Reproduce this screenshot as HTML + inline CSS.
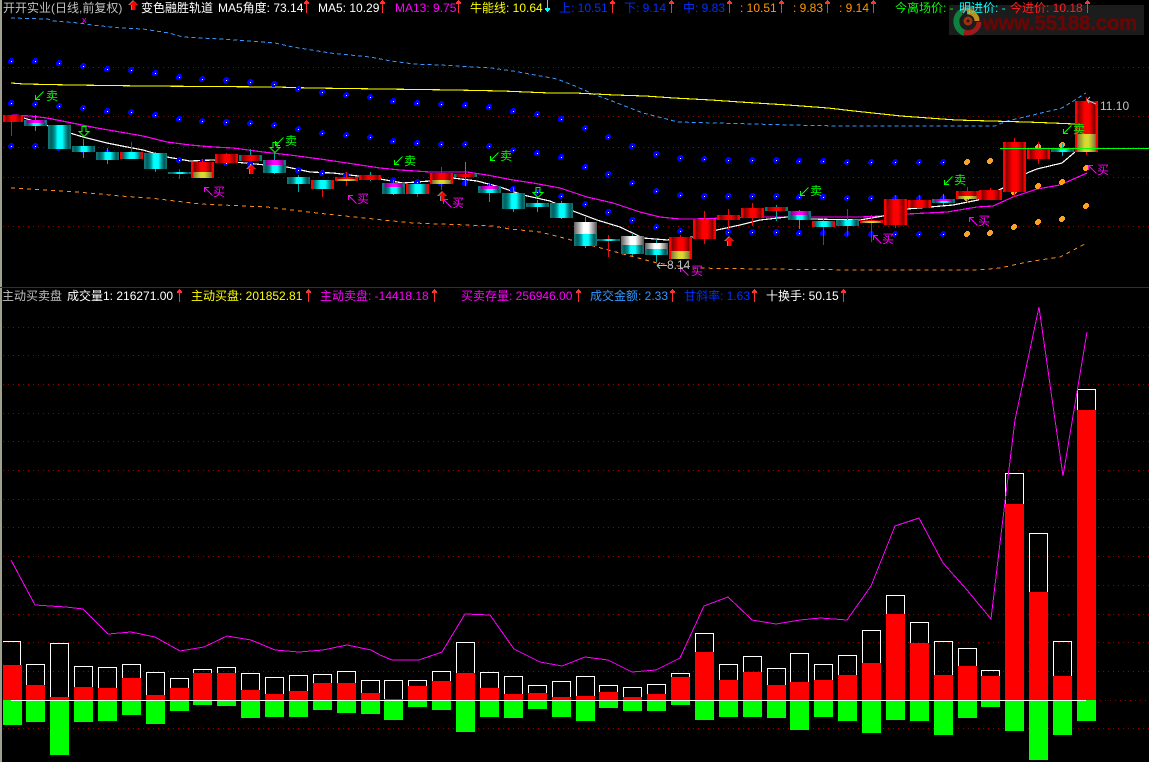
<!DOCTYPE html>
<html lang="zh"><head><meta charset="utf-8"><title>主动买卖盘</title>
<style>
html,body{margin:0;padding:0;background:#000;width:1149px;height:762px;overflow:hidden}
svg{display:block}
text{font-family:"Liberation Sans","WenQuanYi Zen Hei","Noto Sans CJK SC",sans-serif;font-size:12px}
</style></head><body>
<svg xmlns="http://www.w3.org/2000/svg" width="1149" height="762" viewBox="0 0 1149 762">
<defs>
<linearGradient id="c"><stop offset="0" stop-color="#1a7878"/><stop offset=".15" stop-color="#006060"/><stop offset=".3" stop-color="#009898"/><stop offset=".42" stop-color="#0ff"/><stop offset=".62" stop-color="#0ff"/><stop offset=".75" stop-color="#00a0a0"/><stop offset=".88" stop-color="#005858"/><stop offset="1" stop-color="#1a7878"/></linearGradient>
<linearGradient id="r"><stop offset="0" stop-color="#f00"/><stop offset=".08" stop-color="#f00"/><stop offset=".14" stop-color="#800000"/><stop offset=".42" stop-color="#f00"/><stop offset=".62" stop-color="#f00"/><stop offset=".86" stop-color="#800000"/><stop offset=".92" stop-color="#f00"/><stop offset="1" stop-color="#f00"/></linearGradient>
<linearGradient id="cr"><stop offset="0" stop-color="#f00"/><stop offset=".1" stop-color="#f00"/><stop offset=".11" stop-color="#006060"/><stop offset=".42" stop-color="#0ff"/><stop offset=".62" stop-color="#0ff"/><stop offset=".89" stop-color="#006060"/><stop offset=".9" stop-color="#f00"/><stop offset="1" stop-color="#f00"/></linearGradient>
<linearGradient id="rt"><stop offset="0" stop-color="#008080"/><stop offset=".1" stop-color="#008080"/><stop offset=".11" stop-color="#800000"/><stop offset=".45" stop-color="#f00"/><stop offset=".6" stop-color="#f00"/><stop offset=".89" stop-color="#800000"/><stop offset=".9" stop-color="#008080"/><stop offset="1" stop-color="#008080"/></linearGradient>
<linearGradient id="m"><stop offset="0" stop-color="#008080"/><stop offset=".1" stop-color="#008080"/><stop offset=".11" stop-color="#800080"/><stop offset=".45" stop-color="#f0f"/><stop offset=".6" stop-color="#f0f"/><stop offset=".89" stop-color="#800080"/><stop offset=".9" stop-color="#008080"/><stop offset="1" stop-color="#008080"/></linearGradient>
<linearGradient id="y"><stop offset="0" stop-color="#f00"/><stop offset=".08" stop-color="#f00"/><stop offset=".12" stop-color="#808040"/><stop offset=".42" stop-color="#d8d830"/><stop offset=".6" stop-color="#d8d830"/><stop offset=".88" stop-color="#808040"/><stop offset=".92" stop-color="#f00"/><stop offset="1" stop-color="#f00"/></linearGradient>
<linearGradient id="w"><stop offset="0" stop-color="#606060"/><stop offset=".42" stop-color="#fff"/><stop offset=".62" stop-color="#fff"/><stop offset="1" stop-color="#505050"/></linearGradient>
<g id="b"><path d="M-1-3H2V-2H3V1H2V2H1V3H-2V2H-3V-1H-2V-2H-1z" fill="#0000ff"/><rect x="0" y="0" width="1" height="1" fill="#fff"/></g>
<path id="o" d="M-1-3H2V-2H3V1H2V2H1V3H-2V2H-3V-1H-2V-2H-1z" fill="#ffa020"/>
<path id="ag" d="M8.5.5L1 8M.5 4V8.5H5" stroke="#0f0" fill="none"/>
<path id="am" d="M8.5 8.5L1 1M.5 5V.5H5" stroke="#f0f" fill="none"/>
<g id="ru"><path d="M5 0L10 5H7V10H3V5H0z" fill="#888"/><path d="M5.5 1L9.5 5H7.500V10H4V5H1.500z" fill="#f00"/></g>
<path id="gd" d="M3 .5H7V5.500H10L5 10.500 0 5.500H3z" fill="none" stroke="#0f0"/>
<path id="sr" d="M2 0h1v1h1v1h1v2H3v9H2V4H0V2h1V1h1z" fill="#ff3030"/>
</defs>
<rect width="1149" height="762" fill="#000"/>
<rect x="0" y="0" width="2" height="762" fill="#a0a090"/>

<!-- watermark -->
<rect x="949" y="5" width="195" height="30" fill="#1c1c1c"/>
<g fill="none">
<path d="M957 17A13 13 0 0 1 973 9" stroke="#6a6a50" stroke-width="4"/>
<path d="M961 12A12 12 0 0 0 965 33" stroke="#108040" stroke-width="6"/>
<path d="M964 32A11 11 0 0 0 979 22" stroke="#a01818" stroke-width="5"/>
<path d="M967 12A9 9 0 0 1 977 21" stroke="#c09018" stroke-width="5"/>
<circle cx="968" cy="21" r="3" stroke="#a03010" stroke-width="3"/>
</g>
<text x="983" y="30" fill="#680606" stroke="#680606" stroke-width=".5" textLength="154" lengthAdjust="spacingAndGlyphs" style="font-size:21px;font-weight:bold">www.55188.com</text>

<!-- grid -->
<path shape-rendering="crispEdges" stroke="#900000" stroke-dasharray="1 4" fill="none" d="M3 67.5H1149M3 116.500H1149M3 147.500H1149M3 177.500H1149M3 226.500H1149M3 327.500H1149M3 355.500H1149M3 384.500H1149M3 413.500H1149M3 441.500H1149M3 470.500H1149M3 499.500H1149M3 527.500H1149M3 556.500H1149M3 585.500H1149M3 614.500H1149M3 642.500H1149M3 671.500H1149M1100 700.500H1149M3 728.500H1149"/>
<path shape-rendering="crispEdges" stroke="#a00000" d="M0 287.500H1149"/>

<!-- indicator lines -->
<g fill="none" shape-rendering="crispEdges">
<polyline stroke="#3399ff" stroke-dasharray="4 3" points="11,18 48,19 53,21 79,23 92,25 121,28 143,29 169,33 183,37 220,39 275,43 293,47 330,53 370,57 391,61 414,64 440,65 491,68 513,71 557,79 575,86 593,94 612,101 643,113 678,122 791,125 839,126 995,126 1007,121 1033,115 1062,108 1075,100 1086,93"/>
<polyline stroke="#ff8c1a" stroke-dasharray="4 4" points="11,188 47,190 77,192 100,194 120,196 150,198 167,200 200,204 267,207 317,213 383,220 413,223 493,226 510,229 540,232 560,237 597,247 627,255 657,263 693,268 760,269 860,270 977,270 1000,268 1027,262 1060,257 1085,244"/>
<polyline stroke="#ffff00" stroke-width="1.1" points="11,83 24,84 72,85 144,86 275,87 311,88 382,89 454,90 502,91 526,92 550,93 575,93 615,95 645,96 674,98 711,100 740,102 788,105 828,108 854,111 901,116 956,120 1026,122 1052,123 1075,124"/>
<polyline stroke="#ff00ff" stroke-width="1.2" points="12,115 30,116 47,118 72,123 97,128 120,132 143,136 167,142 190,145 213,147 233,148 263,152 290,155 320,159 347,163 380,168 400,170 430,172 467,172 487,175 513,180 533,183 560,188 587,197 613,203 640,212 660,217 680,219 693,219 760,217 810,217 860,217 883,216 907,214 947,212 977,207 993,206 1013,197 1037,189 1060,185 1087,173"/>
<polyline stroke="#ffffff" stroke-width="1.2" points="24,118 70,133 83,137 107,143 127,147 143,150 167,157 190,161 213,160 287,167 310,172 333,173 358,176 380,179 403,183 430,181 453,178 477,181 500,187 523,195 550,201 573,211 597,220 620,227 643,238 667,240 693,237 717,230 740,225 760,220 787,217 810,219 860,220 883,216 907,209 930,207 953,205 978,200 1003,188 1027,173 1037,169 1062,163 1075,152"/>
</g>

<!-- dots -->
<g>
<use href="#b" x="11" y="61"/><use href="#b" x="35" y="61"/><use href="#b" x="59" y="63"/><use href="#b" x="83" y="66"/><use href="#b" x="107" y="69"/><use href="#b" x="131" y="70"/><use href="#b" x="155" y="73"/><use href="#b" x="179" y="77"/><use href="#b" x="202" y="79"/><use href="#b" x="226" y="80"/><use href="#b" x="250" y="82"/><use href="#b" x="274" y="84"/><use href="#b" x="298" y="89"/><use href="#b" x="322" y="92"/><use href="#b" x="346" y="95"/><use href="#b" x="370" y="97"/><use href="#b" x="393" y="101"/><use href="#b" x="417" y="103"/><use href="#b" x="441" y="104"/><use href="#b" x="465" y="105"/><use href="#b" x="489" y="107"/><use href="#b" x="513" y="111"/><use href="#b" x="537" y="114"/><use href="#b" x="561" y="119"/><use href="#b" x="585" y="128"/><use href="#b" x="608" y="137"/><use href="#b" x="632" y="146"/><use href="#b" x="656" y="154"/><use href="#b" x="680" y="158"/><use href="#b" x="704" y="159"/><use href="#b" x="728" y="160"/><use href="#b" x="752" y="160"/><use href="#b" x="776" y="160"/><use href="#b" x="799" y="161"/><use href="#b" x="823" y="161"/><use href="#b" x="847" y="162"/><use href="#b" x="871" y="162"/><use href="#b" x="895" y="162"/><use href="#b" x="919" y="162"/><use href="#b" x="943" y="162"/>
<use href="#b" x="11" y="103"/><use href="#b" x="35" y="104"/><use href="#b" x="59" y="106"/><use href="#b" x="83" y="108"/><use href="#b" x="107" y="111"/><use href="#b" x="131" y="112"/><use href="#b" x="155" y="115"/><use href="#b" x="179" y="119"/><use href="#b" x="202" y="121"/><use href="#b" x="226" y="122"/><use href="#b" x="250" y="123"/><use href="#b" x="274" y="125"/><use href="#b" x="298" y="129"/><use href="#b" x="322" y="133"/><use href="#b" x="346" y="135"/><use href="#b" x="370" y="137"/><use href="#b" x="393" y="141"/><use href="#b" x="417" y="143"/><use href="#b" x="441" y="144"/><use href="#b" x="465" y="144"/><use href="#b" x="489" y="146"/><use href="#b" x="513" y="150"/><use href="#b" x="537" y="153"/><use href="#b" x="561" y="157"/><use href="#b" x="585" y="167"/><use href="#b" x="608" y="174"/><use href="#b" x="632" y="183"/><use href="#b" x="656" y="191"/><use href="#b" x="680" y="195"/><use href="#b" x="704" y="196"/><use href="#b" x="728" y="196"/><use href="#b" x="752" y="196"/><use href="#b" x="776" y="196"/><use href="#b" x="799" y="197"/><use href="#b" x="823" y="197"/><use href="#b" x="847" y="198"/><use href="#b" x="871" y="198"/><use href="#b" x="895" y="198"/><use href="#b" x="919" y="198"/><use href="#b" x="943" y="198"/>
<use href="#b" x="11" y="146"/><use href="#b" x="35" y="146"/><use href="#b" x="59" y="148"/><use href="#b" x="83" y="150"/><use href="#b" x="107" y="153"/><use href="#b" x="131" y="154"/><use href="#b" x="155" y="157"/><use href="#b" x="179" y="160"/><use href="#b" x="202" y="162"/><use href="#b" x="226" y="163"/><use href="#b" x="250" y="164"/><use href="#b" x="274" y="167"/><use href="#b" x="298" y="170"/><use href="#b" x="322" y="173"/><use href="#b" x="346" y="175"/><use href="#b" x="370" y="177"/><use href="#b" x="393" y="180"/><use href="#b" x="417" y="182"/><use href="#b" x="441" y="183"/><use href="#b" x="465" y="183"/><use href="#b" x="489" y="187"/><use href="#b" x="513" y="189"/><use href="#b" x="537" y="192"/><use href="#b" x="561" y="196"/><use href="#b" x="585" y="204"/><use href="#b" x="608" y="212"/><use href="#b" x="632" y="220"/><use href="#b" x="656" y="227"/><use href="#b" x="680" y="231"/><use href="#b" x="704" y="232"/><use href="#b" x="728" y="232"/><use href="#b" x="752" y="232"/><use href="#b" x="776" y="232"/><use href="#b" x="799" y="233"/><use href="#b" x="823" y="233"/><use href="#b" x="847" y="234"/><use href="#b" x="871" y="234"/><use href="#b" x="895" y="234"/><use href="#b" x="919" y="234"/><use href="#b" x="943" y="234"/>
<use href="#o" x="967" y="162"/><use href="#o" x="990" y="161"/><use href="#o" x="1038" y="147"/><use href="#o" x="1062" y="145"/><use href="#o" x="967" y="198"/><use href="#o" x="1014" y="192"/><use href="#o" x="1038" y="186"/><use href="#o" x="1062" y="182"/><use href="#o" x="1086" y="168"/><use href="#o" x="967" y="234"/><use href="#o" x="990" y="233"/><use href="#o" x="1014" y="227"/><use href="#o" x="1038" y="222"/><use href="#o" x="1062" y="219"/><use href="#o" x="1086" y="206"/>
</g>

<!-- wicks -->
<g shape-rendering="crispEdges" fill="none">
<path stroke="#e01010" d="M11.500 115V136M131.500 142V152M179.500 169V179M202.500 159V178M226.500 153V155M322.500 189V197M346.500 172V186M417.500 194V197M441.500 167V190M608.500 235V257M680.500 235V237M704.500 211V244M728.500 209V230M752.500 203V226M823.500 218V245M847.500 209V236M871.500 215V242M895.500 195V228M919.500 195V200M967.500 187V203M990.500 188V190M1014.500 138V197M1038.500 142V164M1086.500 97V155"/>
<path stroke="#00a8a8" d="M35.500 115V131M83.500 139V158M107.500 148V164M155.500 152V172M250.500 149V155M274.500 154V174M298.500 175V192M370.500 172V181M393.500 180V195M465.500 162V186M489.500 183V202M513.500 187V212M537.500 200V212M561.500 201V219M585.500 217V248M632.500 233V256M656.500 240V262M776.500 205V221M799.500 210V229M943.500 194V205M1062.500 143V156"/>
</g>

<!-- candles -->
<g shape-rendering="crispEdges">
<rect x="3" y="115" width="20" height="7" fill="url(#r)"/>
<rect x="24" y="120" width="23" height="3" fill="url(#m)"/><rect x="24" y="123" width="23" height="3" fill="url(#c)"/>
<rect x="48" y="125" width="23" height="24" fill="url(#c)"/>
<rect x="72" y="146" width="23" height="6" fill="url(#c)"/>
<rect x="96" y="152" width="23" height="8" fill="url(#c)"/>
<rect x="120" y="152" width="23" height="7" fill="url(#cr)"/>
<rect x="144" y="153" width="23" height="16" fill="url(#c)"/>
<rect x="168" y="172" width="23" height="2" fill="url(#c)"/>
<rect x="191" y="162" width="23" height="10" fill="url(#r)"/><rect x="191" y="172" width="23" height="6" fill="url(#y)"/>
<rect x="215" y="154" width="23" height="9" fill="url(#r)"/>
<rect x="239" y="155" width="23" height="6" fill="url(#rt)"/>
<rect x="263" y="160" width="23" height="5" fill="url(#m)"/><rect x="263" y="165" width="23" height="8" fill="url(#c)"/>
<rect x="287" y="177" width="23" height="7" fill="url(#c)"/>
<rect x="311" y="180" width="23" height="9" fill="url(#cr)"/>
<rect x="335" y="177" width="23" height="2" fill="url(#r)"/><rect x="335" y="179" width="23" height="2" fill="url(#y)"/>
<rect x="359" y="175" width="22" height="5" fill="url(#r)"/>
<rect x="382" y="183" width="23" height="4" fill="url(#m)"/><rect x="382" y="187" width="23" height="7" fill="url(#c)"/>
<rect x="406" y="184" width="23" height="10" fill="url(#cr)"/>
<rect x="430" y="173" width="23" height="7" fill="url(#r)"/><rect x="430" y="180" width="23" height="4" fill="url(#y)"/>
<rect x="454" y="174" width="23" height="3" fill="url(#rt)"/>
<rect x="478" y="186" width="23" height="3" fill="url(#m)"/><rect x="478" y="189" width="23" height="4" fill="url(#c)"/>
<rect x="502" y="193" width="23" height="16" fill="url(#c)"/>
<rect x="526" y="203" width="23" height="4" fill="url(#c)"/>
<rect x="550" y="203" width="23" height="15" fill="url(#c)"/>
<rect x="574" y="222" width="23" height="12" fill="url(#w)"/><rect x="574" y="234" width="23" height="12" fill="url(#c)"/>
<rect x="597" y="239" width="23" height="2" fill="url(#c)"/>
<rect x="621" y="236" width="23" height="9" fill="url(#w)"/><rect x="621" y="245" width="23" height="9" fill="url(#c)"/>
<rect x="645" y="243" width="23" height="6" fill="url(#w)"/><rect x="645" y="249" width="23" height="6" fill="url(#c)"/>
<rect x="669" y="237" width="23" height="14" fill="url(#r)"/><rect x="669" y="251" width="23" height="8" fill="url(#y)"/>
<rect x="693" y="219" width="23" height="20" fill="url(#r)"/>
<rect x="717" y="215" width="23" height="5" fill="url(#r)"/>
<rect x="741" y="208" width="23" height="10" fill="url(#r)"/>
<rect x="765" y="207" width="23" height="4" fill="url(#rt)"/>
<rect x="788" y="211" width="23" height="4" fill="url(#m)"/><rect x="788" y="215" width="23" height="5" fill="url(#c)"/>
<rect x="812" y="221" width="23" height="6" fill="url(#cr)"/>
<rect x="836" y="220" width="23" height="6" fill="url(#c)"/>
<rect x="860" y="220" width="23" height="1" fill="url(#r)"/><rect x="860" y="221" width="23" height="2" fill="url(#y)"/>
<rect x="884" y="199" width="23" height="26" fill="url(#r)"/>
<rect x="908" y="200" width="23" height="8" fill="url(#r)"/>
<rect x="932" y="199" width="23" height="2" fill="url(#m)"/><rect x="932" y="201" width="23" height="2" fill="url(#c)"/>
<rect x="956" y="191" width="23" height="5" fill="url(#r)"/><rect x="956" y="196" width="23" height="3" fill="url(#y)"/>
<rect x="979" y="190" width="23" height="10" fill="url(#r)"/>
<rect x="1003" y="142" width="23" height="50" fill="url(#r)"/>
<rect x="1027" y="149" width="23" height="10" fill="url(#r)"/>
<rect x="1051" y="149" width="23" height="3" fill="url(#c)"/>
<rect x="1075" y="101" width="23" height="33" fill="url(#r)"/><rect x="1075" y="134" width="23" height="18" fill="url(#y)"/>
</g>
<path stroke="#0f0" shape-rendering="crispEdges" d="M1000 148.500H1149"/>

<!-- signals -->
<use href="#gd" x="79" y="126"/><use href="#gd" x="270" y="142"/><use href="#gd" x="533" y="187"/>
<use href="#ru" x="246" y="164"/><use href="#ru" x="437" y="191"/><use href="#ru" x="724" y="236"/>
<use href="#ag" x="35" y="91"/><use href="#ag" x="275" y="137"/><use href="#ag" x="394" y="156"/><use href="#ag" x="490" y="152"/><use href="#ag" x="800" y="187"/><use href="#ag" x="944" y="176"/><use href="#ag" x="1063" y="125"/>
<g fill="#0f0"><text x="46" y="100">卖</text><text x="285" y="145">卖</text><text x="404" y="165">卖</text><text x="500" y="160">卖</text><text x="810" y="195">卖</text><text x="954" y="184">卖</text><text x="1073" y="133">卖</text></g>
<use href="#am" x="204" y="187"/><use href="#am" x="348" y="195"/><use href="#am" x="443" y="199"/><use href="#am" x="680" y="267"/><use href="#am" x="873" y="235"/><use href="#am" x="969" y="217"/><use href="#am" x="1088" y="165"/>
<g fill="#f0f"><text x="213" y="196">买</text><text x="357" y="203">买</text><text x="452" y="207">买</text><text x="691" y="275">买</text><text x="882" y="243">买</text><text x="978" y="225">买</text><text x="1097" y="174">买</text></g>
<text x="82" y="23" fill="#f0f" style="font-size:9px">x</text>
<g fill="#c0c0c0"><text x="1100" y="110">11.10</text><text x="667" y="269">8.14</text></g>
<path d="M1096 104L1087 100M1087 100l3-3M1087 100l2 3M667 265.500H657M657 265.500l3-3M657 265.500l3 3" stroke="#c0c0c0" fill="none"/>

<!-- top legend -->
<text x="3" y="12" fill="#c0c0c0">开开实业(日线,前复权)</text>
<use href="#ru" x="128" y="0"/>
<text x="141" y="12" fill="#fff">变色融胜轨道</text>
<text x="218" y="12" fill="#fff">MA5角度: 73.14</text><use href="#sr" x="304" y="0"/>
<text x="318" y="12" fill="#fff">MA5: 10.29</text><use href="#sr" x="380" y="0"/>
<text x="395" y="12" fill="#f0f">MA13: 9.75</text><use href="#sr" x="456" y="0"/>
<text x="470" y="12" fill="#ff0">牛能线: 10.64</text>
<path d="M547 0h1v8h2v2h-1v1h-1v1h-1v-1h-1v-1h-1v-2h2z" fill="#0ff"/>
<text x="559" y="12" fill="#0030ff">上: 10.51</text><use href="#sr" x="610" y="0"/>
<text x="624" y="12" fill="#0030ff">下: 9.14</text><use href="#sr" x="669" y="0"/>
<text x="683" y="12" fill="#0030ff">中: 9.83</text><use href="#sr" x="727" y="0"/>
<text x="740" y="12" fill="#ff9900">: 10.51</text><use href="#sr" x="779" y="0"/>
<text x="793" y="12" fill="#ff9900">: 9.83</text><use href="#sr" x="825" y="0"/>
<text x="839" y="12" fill="#ff9900">: 9.14</text><use href="#sr" x="871" y="0"/>
<text x="895" y="12" fill="#0f0">今离场价: -</text>
<text x="959" y="12" fill="#0ff">明进价: -</text>
<text x="1010" y="12" fill="#ff2020">今进价: 10.18</text><use href="#sr" x="1085" y="0"/>

<!-- lower legend -->
<text x="2" y="300" fill="#c0c0c0">主动买卖盘</text>
<text x="67" y="300" fill="#fff">成交量1: 216271.00</text><use href="#sr" x="177" y="289"/>
<text x="191" y="300" fill="#ff0">主动买盘: 201852.81</text><use href="#sr" x="306" y="289"/>
<text x="320" y="300" fill="#f0f">主动卖盘: -14418.18</text><use href="#sr" x="432" y="289"/>
<text x="461" y="300" fill="#f0f">买卖存量: 256946.00</text><use href="#sr" x="576" y="289"/>
<text x="590" y="300" fill="#3399ff">成交金额: 2.33</text><use href="#sr" x="670" y="289"/>
<text x="684" y="300" fill="#0030ff">甘斜率: 1.63</text><use href="#sr" x="752" y="289"/>
<text x="766" y="300" fill="#fff">十换手: 50.15</text><use href="#sr" x="841" y="289"/>

<!-- volume bars -->
<g shape-rendering="crispEdges">
<path fill="#0f0" d="M3 700H22V725H3zM26 700H45V722H26zM50 700H69V755H50zM74 700H93V722H74zM98 700H117V721H98zM122 700H141V715H122zM146 700H165V724H146zM170 700H189V711H170zM193 700H212V705H193zM217 700H236V706H217zM241 700H260V718H241zM265 700H284V717H265zM289 700H308V717H289zM313 700H332V710H313zM337 700H356V713H337zM361 700H380V714H361zM384 700H403V720H384zM408 700H427V707H408zM432 700H451V710H432zM456 700H475V732H456zM480 700H499V717H480zM504 700H523V718H504zM528 700H547V709H528zM552 700H571V717H552zM576 700H595V721H576zM599 700H618V708H599zM623 700H642V711H623zM647 700H666V711H647zM671 700H690V705H671zM695 700H714V720H695zM719 700H738V717H719zM743 700H762V717H743zM767 700H786V718H767zM790 700H809V730H790zM814 700H833V717H814zM838 700H857V721H838zM862 700H881V733H862zM886 700H905V720H886zM910 700H929V721H910zM934 700H953V735H934zM958 700H977V718H958zM981 700H1000V707H981zM1005 700H1024V731H1005zM1029 700H1048V760H1029zM1053 700H1072V735H1053zM1077 700H1096V721H1077z"/>
<path fill="#f00" d="M3 665H22V700H3zM26 685H45V700H26zM50 697H69V700H50zM74 687H93V700H74zM98 688H117V700H98zM122 678H141V700H122zM146 695H165V700H146zM170 688H189V700H170zM193 673H212V700H193zM217 673H236V700H217zM241 690H260V700H241zM265 694H284V700H265zM289 691H308V700H289zM313 683H332V700H313zM337 683H356V700H337zM361 693H380V700H361zM384 699H403V700H384zM408 686H427V700H408zM432 681H451V700H432zM456 673H475V700H456zM480 688H499V700H480zM504 694H523V700H504zM528 693H547V700H528zM552 697H571V700H552zM576 696H595V700H576zM599 692H618V700H599zM623 697H642V700H623zM647 694H666V700H647zM671 677H690V700H671zM695 652H714V700H695zM719 680H738V700H719zM743 672H762V700H743zM767 685H786V700H767zM790 682H809V700H790zM814 680H833V700H814zM838 675H857V700H838zM862 663H881V700H862zM886 614H905V700H886zM910 643H929V700H910zM934 675H953V700H934zM958 666H977V700H958zM981 676H1000V700H981zM1005 504H1024V700H1005zM1029 592H1048V700H1029zM1053 676H1072V700H1053zM1077 410H1096V700H1077z"/>
<path fill="none" stroke="#fff" d="M3 641.500H20.500V665M26.500 685V664.500H44.500V685M50.500 697V643.500H68.500V697M74.500 687V666.500H92.500V687M98.500 688V667.500H116.500V688M122.500 678V664.500H140.500V678M146.500 695V672.500H164.500V695M170.500 688V678.500H188.500V688M193.500 673V669.500H211.500V673M217.500 673V667.500H235.500V673M241.500 690V673.500H259.500V690M265.500 694V677.500H283.500V694M289.500 691V675.500H307.500V691M313.500 683V674.500H331.500V683M337.500 683V671.500H355.500V683M361.500 693V680.500H379.500V693M384.500 699V680.500H402.500V699M408.500 686V680.500H426.500V686M432.500 681V671.500H450.500V681M456.500 673V642.500H474.500V673M480.500 688V672.500H498.500V688M504.500 694V676.500H522.500V694M528.500 693V685.500H546.500V693M552.500 697V681.500H570.500V697M576.500 696V676.500H594.500V696M599.500 692V685.500H617.500V692M623.500 697V687.500H641.500V697M647.500 694V684.500H665.500V694M671.500 677V673.500H689.500V677M695.500 652V633.500H713.500V652M719.500 680V664.500H737.500V680M743.500 672V656.500H761.500V672M767.500 685V668.500H785.500V685M790.500 682V653.500H808.500V682M814.500 680V664.500H832.500V680M838.500 675V655.500H856.500V675M862.500 663V630.500H880.500V663M886.500 614V595.500H904.500V614M910.500 643V622.500H928.500V643M934.500 675V641.500H952.500V675M958.500 666V648.500H976.500V666M981.500 676V670.500H999.500V676M1005.500 504V473.500H1023.500V504M1029.500 592V533.500H1047.500V592M1053.500 676V641.500H1071.500V676M1077.500 410V389.500H1095.500V410"/>
<path stroke="#fff" d="M11 700.500H1086"/>
</g>
<polyline fill="none" stroke="#ff00ff" shape-rendering="crispEdges" points="11,560 35,605 50,606 66,607 83,609 108,634 131,632 155,637 180,651 204,647 227,636 251,640 275,650 299,652 323,650 347,645 371,650 380,655 392,660 419,660 442,652 465,614 490,615 514,649 540,662 562,666 585,657 608,660 632,672 656,670 680,658 704,606 728,597 752,620 776,624 800,620 820,618 847,620 871,586 895,526 919,518 943,563 967,590 991,619 1000,543 1015,420 1039,307 1063,476 1087,332"/>
</svg>
</body></html>
